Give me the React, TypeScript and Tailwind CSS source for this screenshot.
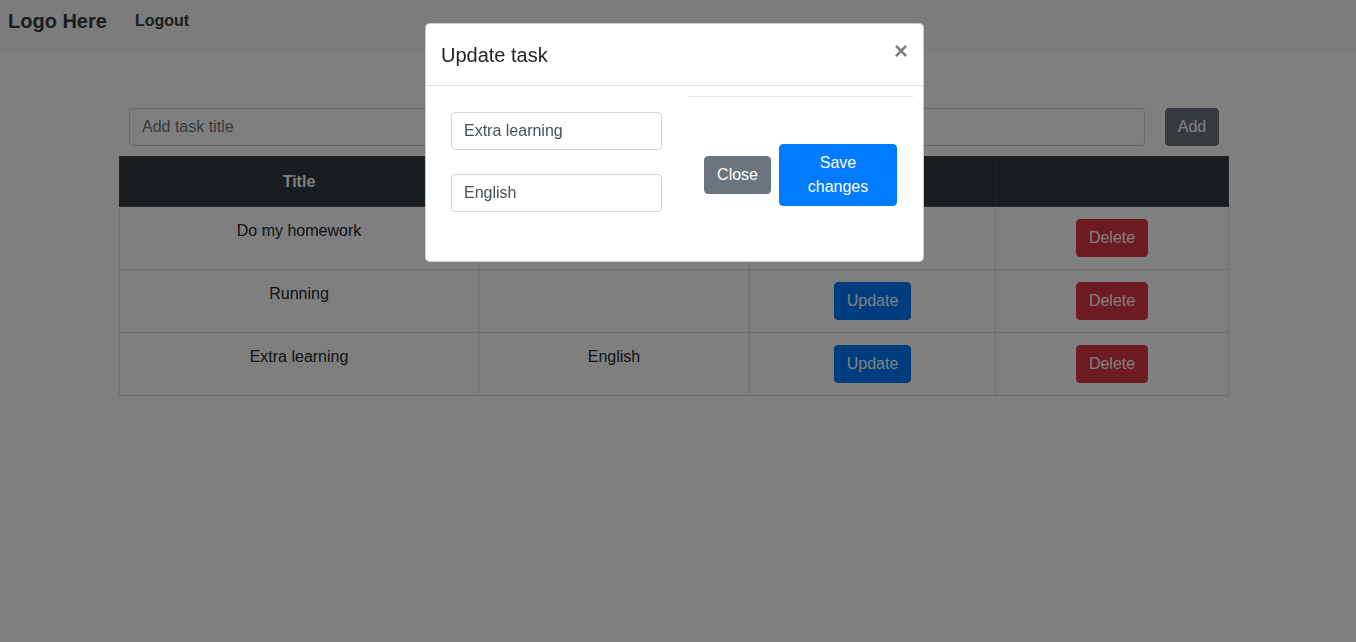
import React from "react";

interface Task {
  title: string;
  description: string;
}

const tasks: Task[] = [
  { title: "Do my homework", description: "" },
  { title: "Running", description: "" },
  { title: "Extra learning", description: "English" },
];

export default function App() {
  return (
    <div className="relative min-h-[642px] bg-white font-['Liberation_Sans',Arial,sans-serif] text-[16px] text-[#212529]">
      {/* Navbar */}
      <nav className="flex h-[50px] items-start bg-[#f8f9fa] pl-2 pt-[9px]">
        <span className="text-[20px] font-bold leading-6 text-[#343a40]">Logo Here</span>
        <span className="ml-[28px] text-[16px] font-bold leading-6 text-[#343a40]">Logout</span>
      </nav>

      {/* Add task form */}
      <div className="ml-[129px] mt-[58px] flex gap-5">
        <input
          className="h-[38px] w-[1016px] rounded border border-[#ced4da] px-3 text-[16px] text-[#495057] placeholder:text-[#6c757d]"
          placeholder="Add task title"
        />
        <button className="h-[38px] w-[54px] rounded border border-[#6c757d] bg-[#6c757d] text-white">
          Add
        </button>
      </div>

      {/* Tasks table */}
      <table className="ml-[119px] mt-[10px] w-[1109px] table-fixed border-collapse text-center">
        <colgroup>
          <col className="w-[359px]" />
          <col className="w-[271px]" />
          <col className="w-[246px]" />
          <col className="w-[233px]" />
        </colgroup>
        <thead>
          <tr className="h-[50px] bg-[#343a40] text-white">
            <th className="border border-[#454d55] px-3 py-[11px] font-bold">Title</th>
            <th className="border border-[#454d55] px-3 py-[11px] font-bold">Description</th>
            <th className="border border-[#454d55] px-3 py-[11px]"></th>
            <th className="border border-[#454d55] px-3 py-[11px]"></th>
          </tr>
        </thead>
        <tbody>
          {tasks.map((task, idx) => (
            <tr key={idx} className="h-[63px]">
              <td className="border border-[#dee2e6] px-3 pb-[11px] pt-3 align-top leading-6">{task.title}</td>
              <td className="border border-[#dee2e6] px-3 pb-[11px] pt-3 align-top leading-6">{task.description}</td>
              <td className="border border-[#dee2e6] px-3 pb-[11px] pt-3 align-top">
                <button className="h-[38px] rounded border border-[#007bff] bg-[#007bff] px-3 text-white">
                  Update
                </button>
              </td>
              <td className="border border-[#dee2e6] px-3 pb-[11px] pt-3 align-top">
                <button className="h-[38px] rounded border border-[#dc3545] bg-[#dc3545] px-3 text-white">
                  Delete
                </button>
              </td>
            </tr>
          ))}
        </tbody>
      </table>

      {/* Backdrop */}
      <div className="fixed inset-0 bg-black/50" />

      {/* Modal */}
      <div className="absolute left-[425px] top-[23px] w-[499px] rounded-[5px] border border-black/20 bg-white">
        <div className="flex h-[62px] items-center justify-between border-b border-[#dee2e6] pl-[15px] pr-4">
          <h5 className="text-[20px] leading-[30px] text-[#212529]">Update task</h5>
          <button className="mb-2 mr-[-1px] text-[24px] font-bold leading-none text-black opacity-50">
            ×
          </button>
        </div>
        <div className="flex h-[175px]">
          <div className="flex flex-col gap-6 pl-[25px] pt-[26px]">
            <input
              className="h-[38px] w-[211px] rounded border border-[#ced4da] px-3 text-[16px] text-[#495057]"
              defaultValue="Extra learning"
            />
            <input
              className="h-[38px] w-[211px] rounded border border-[#ced4da] px-3 text-[16px] text-[#495057]"
              defaultValue="English"
            />
          </div>
          <div className="ml-[26px] mt-[10px] flex h-[156px] w-[225px] items-center justify-end gap-2 border-t border-[#dee2e6] px-4">
            <button className="h-[38px] rounded border border-[#6c757d] bg-[#6c757d] px-3 text-white">
              Close
            </button>
            <button className="h-[62px] w-[118px] rounded border border-[#007bff] bg-[#007bff] px-3 leading-6 text-white">
              Save changes
            </button>
          </div>
        </div>
      </div>
    </div>
  );
}
